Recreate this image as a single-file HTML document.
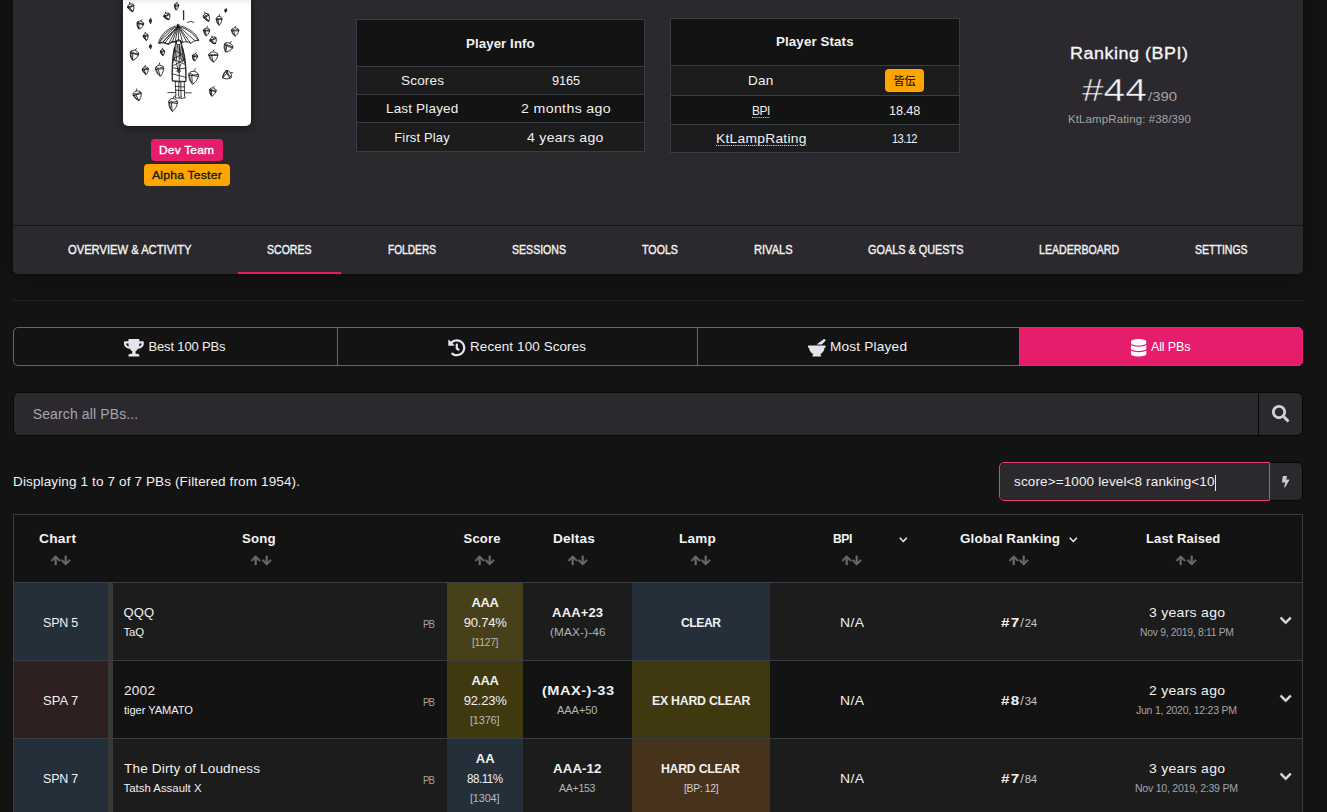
<!DOCTYPE html>
<html lang="en">
<head>
<meta charset="utf-8">
<title>Scores</title>
<style>
*{box-sizing:border-box;margin:0;padding:0}
html,body{width:1327px;height:812px;overflow:hidden;background:#131313}
body{font-family:"Liberation Sans","Noto Sans CJK JP",sans-serif;color:#ececec;font-size:14px;position:relative}
.abs{position:absolute}
.t{position:absolute;white-space:nowrap;line-height:1}
.ic{position:absolute;overflow:visible}
.card{position:absolute;left:13px;top:-30px;width:1290px;height:304px;background:#2b292d;border-radius:5px;box-shadow:0 0 22px 2px rgba(0,0,0,.35)}
.card .sep{position:absolute;left:0;right:0;top:255px;height:1px;background:#161618}
.avatar{position:absolute;left:123px;top:-6px;width:128px;height:132px;background:#fff;border-radius:5px;box-shadow:0 2px 8px rgba(0,0,0,.45);overflow:hidden}
.badge{position:absolute;border-radius:4px}
.it{position:absolute;border:1px solid #363d44;background:#131313}
.it .r{position:absolute;left:0;right:0;border-top:1px solid #363d44}
.it .odd{background:#1c1c1c}
.bg{position:absolute;left:13px;top:327px;width:1290px;height:39px;border:1px solid #6a6466;border-radius:5px;overflow:hidden}
.bg .d{position:absolute;top:0;bottom:0;width:1px;background:#6a6466}
.act{position:absolute;left:1019px;top:327px;width:284px;height:39px;background:#e61c6d;border:1px solid #ef2077;border-radius:0 5px 5px 0}
.inp{position:absolute;background:#2b292d;border:1px solid #070707;border-radius:6px}
.tbl{position:absolute;left:13px;top:514px;width:1290px;height:310px;border:1px solid #363d44;border-bottom:none;background:#131313}
.row{position:absolute;left:0;width:1288px;height:78px;border-top:1px solid #363d44}
.cell{position:absolute;top:0;bottom:0}

</style>
</head>
<body>
<header>
<div class="card"><div class="sep"></div></div>
<div class="avatar"><svg class="ic" style="left:0;top:4px" width="128" height="128" viewBox="0 0 128 128"><defs><linearGradient id="ag" x1="0" y1="0" x2="0" y2="1"><stop offset="0" stop-color="#e9e9e9"/><stop offset="1" stop-color="#fff"/></linearGradient></defs><rect x="0" y="0" width="128" height="7" fill="url(#ag)"/><g fill="none" stroke="#111" stroke-width="0.8" stroke-linecap="round" stroke-linejoin="round"><path transform="translate(8.01 9.20) rotate(-20)" d="M-3.03 -0.74 C-3.19 2.23 -1.01 3.97 0 4.96 C1.01 3.97 3.19 2.23 3.03 -0.74 M-3.36 -0.74 C-3.36 -4.22 3.36 -4.22 3.36 -0.74 Z M-2.69 -1.64 Q0 -0.15 2.69 -1.64 M0 -3.87 L0.50 -4.96 M-2.52 -0.44 C-2.35 2.48 -0.34 4.22 0.34 4.57 M-1.18 -0.24 L-0.34 3.47"/><path transform="translate(53.47 8.08) rotate(5)" d="M-2.02 -0.62 C-2.13 1.87 -0.67 3.33 0 4.16 C0.67 3.33 2.13 1.87 2.02 -0.62 M-2.24 -0.62 C-2.24 -3.54 2.24 -3.54 2.24 -0.62 Z M-1.79 -1.37 Q0 -0.12 1.79 -1.37 M0 -3.25 L0.34 -4.16 M-1.68 -0.32 C-1.57 2.08 -0.22 3.54 0.22 3.83 M-0.78 -0.12 L-0.22 2.91"/><path transform="translate(44.03 18.01) rotate(-25)" d="M-3.03 -0.62 C-3.19 1.87 -1.01 3.33 0 4.16 C1.01 3.33 3.19 1.87 3.03 -0.62 M-3.36 -0.62 C-3.36 -3.54 3.36 -3.54 3.36 -0.62 Z M-2.69 -1.37 Q0 -0.12 2.69 -1.37 M0 -3.25 L0.50 -4.16 M-2.52 -0.32 C-2.35 2.08 -0.34 3.54 0.34 3.83 M-1.18 -0.12 L-0.34 2.91"/><path transform="translate(27.54 22.81) rotate(0)" d="M-1.01 -0.41 C-1.06 1.22 -0.34 2.18 0 2.72 C0.34 2.18 1.06 1.22 1.01 -0.41 M-1.12 -0.41 C-1.12 -2.31 1.12 -2.31 1.12 -0.41 Z M-0.90 -0.90 Q0 -0.08 0.90 -0.90 M0 -2.12 L0.17 -2.72 M-0.84 -0.11 C-0.78 1.36 -0.11 2.31 0.11 2.50 M-0.39 0.09 L-0.11 1.91"/><path transform="translate(17.13 26.34) rotate(15)" d="M-3.17 -0.74 C-3.35 2.23 -1.06 3.97 0 4.96 C1.06 3.97 3.35 2.23 3.17 -0.74 M-3.52 -0.74 C-3.52 -4.22 3.52 -4.22 3.52 -0.74 Z M-2.82 -1.64 Q0 -0.15 2.82 -1.64 M0 -3.87 L0.53 -4.96 M-2.64 -0.44 C-2.47 2.48 -0.35 4.22 0.35 4.57 M-1.23 -0.24 L-0.35 3.47"/><path transform="translate(22.73 38.50) rotate(-10)" d="M-2.31 -0.62 C-2.43 1.87 -0.77 3.33 0 4.16 C0.77 3.33 2.43 1.87 2.31 -0.62 M-2.56 -0.62 C-2.56 -3.54 2.56 -3.54 2.56 -0.62 Z M-2.05 -1.37 Q0 -0.12 2.05 -1.37 M0 -3.25 L0.38 -4.16 M-1.92 -0.32 C-1.79 2.08 -0.26 3.54 0.26 3.83 M-0.90 -0.12 L-0.26 2.91"/><path transform="translate(27.54 48.43) rotate(0)" d="M-1.01 -0.36 C-1.06 1.08 -0.34 1.92 0 2.40 C0.34 1.92 1.06 1.08 1.01 -0.36 M-1.12 -0.36 C-1.12 -2.04 1.12 -2.04 1.12 -0.36 Z M-0.90 -0.79 Q0 -0.07 0.90 -0.79 M0 -1.87 L0.17 -2.40 M-0.84 -0.06 C-0.78 1.20 -0.11 2.04 0.11 2.21 M-0.39 0.14 L-0.11 1.68"/><path transform="translate(11.21 56.43) rotate(15)" d="M-4.03 -0.94 C-4.26 2.81 -1.34 5.00 0 6.24 C1.34 5.00 4.26 2.81 4.03 -0.94 M-4.48 -0.94 C-4.48 -5.31 4.48 -5.31 4.48 -0.94 Z M-3.59 -2.06 Q0 -0.19 3.59 -2.06 M0 -4.87 L0.67 -6.24 M-3.36 -0.64 C-3.14 3.12 -0.45 5.31 0.45 5.74 M-1.57 -0.44 L-0.45 4.37"/><path transform="translate(39.55 54.03) rotate(-5)" d="M-2.02 -0.58 C-2.13 1.73 -0.67 3.07 0 3.84 C0.67 3.07 2.13 1.73 2.02 -0.58 M-2.24 -0.58 C-2.24 -3.27 2.24 -3.27 2.24 -0.58 Z M-1.79 -1.27 Q0 -0.12 1.79 -1.27 M0 -3.00 L0.34 -3.84 M-1.68 -0.28 C-1.57 1.92 -0.22 3.27 0.22 3.54 M-0.78 -0.08 L-0.22 2.69"/><path transform="translate(22.41 71.96) rotate(-8)" d="M-2.88 -0.70 C-3.04 2.09 -0.96 3.71 0 4.64 C0.96 3.71 3.04 2.09 2.88 -0.70 M-3.20 -0.70 C-3.20 -3.95 3.20 -3.95 3.20 -0.70 Z M-2.56 -1.53 Q0 -0.14 2.56 -1.53 M0 -3.62 L0.48 -4.64 M-2.40 -0.40 C-2.24 2.32 -0.32 3.95 0.32 4.27 M-1.12 -0.20 L-0.32 3.25"/><path transform="translate(36.66 71.64) rotate(-5)" d="M-3.89 -1.01 C-4.11 3.03 -1.30 5.38 0 6.72 C1.30 5.38 4.11 3.03 3.89 -1.01 M-4.32 -1.01 C-4.32 -5.72 4.32 -5.72 4.32 -1.01 Z M-3.46 -2.22 Q0 -0.20 3.46 -2.22 M0 -5.24 L0.65 -6.72 M-3.24 -0.71 C-3.03 3.36 -0.43 5.72 0.43 6.19 M-1.51 -0.51 L-0.43 4.71"/><path transform="translate(14.41 96.94) rotate(-15)" d="M-3.89 -0.89 C-4.11 2.67 -1.30 4.74 0 5.92 C1.30 4.74 4.11 2.67 3.89 -0.89 M-4.32 -0.89 C-4.32 -5.04 4.32 -5.04 4.32 -0.89 Z M-3.46 -1.95 Q0 -0.18 3.46 -1.95 M0 -4.62 L0.65 -5.92 M-3.24 -0.59 C-3.03 2.96 -0.43 5.04 0.43 5.45 M-1.51 -0.39 L-0.43 4.15"/><path transform="translate(83.57 18.81) rotate(-25)" d="M-2.74 -0.77 C-2.89 2.31 -0.91 4.10 0 5.12 C0.91 4.10 2.89 2.31 2.74 -0.77 M-3.04 -0.77 C-3.04 -4.35 3.04 -4.35 3.04 -0.77 Z M-2.43 -1.69 Q0 -0.15 2.43 -1.69 M0 -4.00 L0.46 -5.12 M-2.28 -0.47 C-2.13 2.56 -0.30 4.35 0.30 4.71 M-1.06 -0.27 L-0.30 3.59"/><path transform="translate(96.06 22.01) rotate(0)" d="M-2.74 -0.82 C-2.89 2.45 -0.91 4.35 0 5.44 C0.91 4.35 2.89 2.45 2.74 -0.82 M-3.04 -0.82 C-3.04 -4.63 3.04 -4.63 3.04 -0.82 Z M-2.43 -1.80 Q0 -0.16 2.43 -1.80 M0 -4.25 L0.46 -5.44 M-2.28 -0.52 C-2.13 2.72 -0.30 4.63 0.30 5.01 M-1.06 -0.32 L-0.30 3.81"/><path transform="translate(102.79 12.41) rotate(10)" d="M-0.86 -0.29 C-0.91 0.86 -0.29 1.54 0 1.92 C0.29 1.54 0.91 0.86 0.86 -0.29 M-0.96 -0.29 C-0.96 -1.63 0.96 -1.63 0.96 -0.29 Z M-0.77 -0.63 Q0 -0.06 0.77 -0.63 M0 -1.50 L0.14 -1.92 M-0.72 0.01 C-0.67 0.96 -0.10 1.63 0.10 1.77 M-0.34 0.21 L-0.10 1.34"/><path transform="translate(83.57 33.22) rotate(5)" d="M-2.88 -0.72 C-3.04 2.16 -0.96 3.84 0 4.80 C0.96 3.84 3.04 2.16 2.88 -0.72 M-3.20 -0.72 C-3.20 -4.08 3.20 -4.08 3.20 -0.72 Z M-2.56 -1.59 Q0 -0.14 2.56 -1.59 M0 -3.75 L0.48 -4.80 M-2.40 -0.42 C-2.24 2.40 -0.32 4.08 0.32 4.42 M-1.12 -0.22 L-0.32 3.36"/><path transform="translate(112.07 33.22) rotate(0)" d="M-3.46 -0.77 C-3.65 2.31 -1.15 4.10 0 5.12 C1.15 4.10 3.65 2.31 3.46 -0.77 M-3.84 -0.77 C-3.84 -4.35 3.84 -4.35 3.84 -0.77 Z M-3.07 -1.69 Q0 -0.15 3.07 -1.69 M0 -4.00 L0.58 -5.12 M-2.88 -0.47 C-2.69 2.56 -0.38 4.35 0.38 4.71 M-1.34 -0.27 L-0.38 3.59"/><path transform="translate(90.30 42.03) rotate(-25)" d="M-3.17 -0.65 C-3.35 1.95 -1.06 3.46 0 4.32 C1.06 3.46 3.35 1.95 3.17 -0.65 M-3.52 -0.65 C-3.52 -3.67 3.52 -3.67 3.52 -0.65 Z M-2.82 -1.43 Q0 -0.13 2.82 -1.43 M0 -3.37 L0.53 -4.32 M-2.64 -0.35 C-2.47 2.16 -0.35 3.67 0.35 3.98 M-1.23 -0.15 L-0.35 3.03"/><path transform="translate(105.19 48.75) rotate(25)" d="M-4.18 -0.89 C-4.41 2.67 -1.39 4.74 0 5.92 C1.39 4.74 4.41 2.67 4.18 -0.89 M-4.64 -0.89 C-4.64 -5.04 4.64 -5.04 4.64 -0.89 Z M-3.71 -1.95 Q0 -0.18 3.71 -1.95 M0 -4.62 L0.70 -5.92 M-3.48 -0.59 C-3.25 2.96 -0.46 5.04 0.46 5.45 M-1.63 -0.39 L-0.46 4.15"/><path transform="translate(90.30 58.04) rotate(0)" d="M-4.32 -0.94 C-4.56 2.81 -1.44 5.00 0 6.24 C1.44 5.00 4.56 2.81 4.32 -0.94 M-4.80 -0.94 C-4.80 -5.31 4.80 -5.31 4.80 -0.94 Z M-3.84 -2.06 Q0 -0.19 3.84 -2.06 M0 -4.87 L0.72 -6.24 M-3.60 -0.64 C-3.36 3.12 -0.48 5.31 0.48 5.74 M-1.68 -0.44 L-0.48 4.37"/><path transform="translate(71.89 58.84) rotate(10)" d="M-2.45 -0.65 C-2.59 1.95 -0.82 3.46 0 4.32 C0.82 3.46 2.59 1.95 2.45 -0.65 M-2.72 -0.65 C-2.72 -3.67 2.72 -3.67 2.72 -0.65 Z M-2.18 -1.43 Q0 -0.13 2.18 -1.43 M0 -3.37 L0.41 -4.32 M-2.04 -0.35 C-1.91 2.16 -0.27 3.67 0.27 3.98 M-0.95 -0.15 L-0.27 3.03"/><path transform="translate(70.45 78.53) rotate(8)" d="M-4.61 -1.18 C-4.87 3.53 -1.54 6.28 0 7.85 C1.54 6.28 4.87 3.53 4.61 -1.18 M-5.12 -1.18 C-5.12 -6.67 5.12 -6.67 5.12 -1.18 Z M-4.10 -2.59 Q0 -0.24 4.10 -2.59 M0 -6.12 L0.77 -7.85 M-3.84 -0.88 C-3.59 3.92 -0.51 6.67 0.51 7.22 M-1.79 -0.68 L-0.51 5.49"/><path transform="translate(104.39 76.93) rotate(60)" d="M-4.03 -0.84 C-4.26 2.52 -1.34 4.48 0 5.60 C1.34 4.48 4.26 2.52 4.03 -0.84 M-4.48 -0.84 C-4.48 -4.76 4.48 -4.76 4.48 -0.84 Z M-3.59 -1.85 Q0 -0.17 3.59 -1.85 M0 -4.37 L0.67 -5.60 M-3.36 -0.54 C-3.14 2.80 -0.45 4.76 0.45 5.16 M-1.57 -0.34 L-0.45 3.92"/><path transform="translate(89.66 93.26) rotate(12)" d="M-3.17 -0.77 C-3.35 2.31 -1.06 4.10 0 5.12 C1.06 4.10 3.35 2.31 3.17 -0.77 M-3.52 -0.77 C-3.52 -4.35 3.52 -4.35 3.52 -0.77 Z M-2.82 -1.69 Q0 -0.15 2.82 -1.69 M0 -4.00 L0.53 -5.12 M-2.64 -0.47 C-2.47 2.56 -0.35 4.35 0.35 4.71 M-1.23 -0.27 L-0.35 3.59"/><path transform="translate(49.95 105.75) rotate(5)" d="M-4.18 -1.18 C-4.41 3.53 -1.39 6.28 0 7.85 C1.39 6.28 4.41 3.53 4.18 -1.18 M-4.64 -1.18 C-4.64 -6.67 4.64 -6.67 4.64 -1.18 Z M-3.71 -2.59 Q0 -0.24 3.71 -2.59 M0 -6.12 L0.70 -7.85 M-3.48 -0.88 C-3.25 3.92 -0.46 6.67 0.46 7.22 M-1.63 -0.68 L-0.46 5.49"/><path d="M35.63 44.29 C38.09 35.42 46.72 28.64 55.10 27.78 C63.97 28.64 73.22 34.80 75.68 42.19"/><path d="M36.37 45.03 C39.32 36.65 47.34 29.99 55.10 28.76 C63.36 29.99 71.98 36.16 75.07 42.81"/><path d="M35.63 44.66 Q40.56 42.81 45.49 45.89 Q48.57 42.19 52.26 43.43 Q55.96 41.58 59.66 44.29 Q63.97 42.19 67.67 45.28 Q71.98 41.58 75.68 42.19"/><path d="M35.87 45.28 Q40.80 43.80 45.49 46.51 Q48.94 43.06 52.26 44.04"/><path d="M55.10 27.78 L45.49 45.89"/><path d="M55.10 27.78 L52.26 43.43"/><path d="M55.10 27.78 L59.66 44.29"/><path d="M55.10 27.78 L67.67 45.28"/><path d="M55.10 27.78 L40.56 43.55"/><path d="M55.10 27.78 L71.98 42.81"/><path d="M55.10 27.78 L49.18 44.29"/><path d="M55.10 27.78 L63.97 44.29"/><path d="M37.48 42.81 L50.42 30.49"/><path d="M39.32 44.29 L51.65 31.47"/><path d="M41.79 45.03 L53.13 30.49"/><path d="M54.11 26.79 Q55.10 25.31 56.33 26.79 Q55.35 28.27 54.11 26.79"/><path d="M52.88 44.29 C52.88 40.96 58.30 40.96 58.30 44.29 C58.30 47.49 52.88 47.49 52.88 44.29"/><path d="M53.13 43.43 C51.03 48.97 51.65 58.83 49.80 64.99"/><path d="M58.06 43.43 C60.28 48.97 59.29 58.83 61.51 64.99"/><path d="M54.73 46.51 C53.50 52.67 54.36 58.83 52.88 63.76"/><path d="M56.58 46.51 C57.81 52.67 57.19 58.83 59.29 63.76"/><path d="M53.87 42.32 C52.26 47.74 53.13 55.14 51.40 62.53"/><path d="M57.32 42.32 C59.29 47.74 58.55 55.14 60.28 62.53"/><path d="M55.10 28.76 L55.59 42.81"/><path d="M56.33 47.12 L57.19 61.30"/><path d="M51.65 48.97 C49.80 58.83 49.18 71.16 49.43 82.87 L62.74 83.48 C62.99 71.16 62.12 58.83 59.29 48.97"/><path d="M51.16 50.21 C49.18 60.07 48.69 71.16 49.18 82.25"/><path d="M59.78 50.21 C62.74 60.07 63.48 71.16 62.99 82.50"/><path d="M49.43 82.87 Q55.96 84.96 62.74 83.48"/><path d="M53.50 64.99 L55.35 73.62 57.81 66.23"/><path d="M49.80 69.92 Q55.96 71.90 62.49 70.17"/><path d="M54.11 73.01 C54.11 70.91 57.32 70.91 57.32 73.01 C57.32 75.10 54.11 75.10 54.11 73.01"/><path d="M55.96 48.97 L56.33 82.87"/><path d="M50.42 61.30 L61.51 66.23"/><path d="M50.17 76.09 L62.12 79.17"/><path d="M61.75 61.30 L50.66 67.46"/><path d="M52.26 52.67 L59.04 56.37 51.65 60.07"/><path d="M52.26 83.48 L52.88 97.04"/><path d="M55.96 83.97 L55.59 97.04"/><path d="M57.81 83.97 L58.06 98.27"/><path d="M61.26 83.48 L61.51 97.04"/><path d="M52.88 97.04 L52.26 99.75 56.58 100.24 55.59 97.04"/><path d="M58.06 98.27 L57.81 100.49 62.25 99.75 61.51 97.04"/><path d="M52.26 88.41 L61.51 89.03"/><path d="M52.51 92.11 L61.51 92.72"/><path d="M44.87 94.57 L52.26 94.57"/><path d="M62.12 94.82 L68.29 94.82"/><path d="M60.28 12.62 L60.52 21.86"/><path d="M60.77 12.99 L60.77 21.61"/><path d="M64.59 24.32 Q67.67 22.35 70.87 24.32"/></g></svg></div>
<div class="badge" style="left:151px;top:139px;width:72px;height:21.7px;background:#e61c6d"></div>
<span class="t " id="t0" style="font-size:11.4px;top:145.00px;color:#fff;letter-spacing:0.187px;transform-origin:0 50%;left:159.30px;transform:scaleX(1.0499);-webkit-text-stroke:0.35px #fff">Dev Team</span>
<div class="badge" style="left:144px;top:164.2px;width:86px;height:21.6px;background:#ffa500"></div>
<span class="t " id="t1" style="font-size:11.4px;top:170.00px;color:#1b1b1b;letter-spacing:0.196px;transform-origin:0 50%;left:152.35px;transform:scaleX(1.0679);-webkit-text-stroke:0.35px #1b1b1b">Alpha Tester</span>
<div class="it" style="left:356px;top:19px;width:289px;height:133px"><div class="r odd" style="top:46px;height:29px"></div><div class="r" style="top:74px;height:29px"></div><div class="r odd" style="top:102px;height:29px"></div></div>
<span class="t " id="t2" style="font-size:13px;top:37.00px;font-weight:bold;color:#f1f1f1;letter-spacing:0.076px;transform-origin:0 50%;left:466.45px;transform:scaleX(1.0218)">Player Info</span>
<span class="t " id="t3" style="font-size:13px;top:74.00px;color:#f1f1f1;letter-spacing:0.170px;transform-origin:0 50%;left:400.50px;transform:scaleX(1.0407)">Scores</span>
<span class="t " id="t4" style="font-size:13px;top:74.00px;color:#f1f1f1;letter-spacing:-0.110px;transform-origin:0 50%;left:551.60px;transform:scaleX(0.9793)">9165</span>
<span class="t " id="t5" style="font-size:13px;top:102.00px;color:#f1f1f1;letter-spacing:0.147px;transform-origin:0 50%;left:385.85px;transform:scaleX(1.0417)">Last Played</span>
<span class="t " id="t6" style="font-size:13px;top:102.00px;color:#f1f1f1;letter-spacing:0.319px;transform-origin:0 50%;left:520.75px;transform:scaleX(1.0901)">2 months ago</span>
<span class="t " id="t7" style="font-size:13px;top:131.00px;color:#f1f1f1;letter-spacing:0.148px;left:394.25px">First Play</span>
<span class="t " id="t8" style="font-size:13px;top:131.00px;color:#f1f1f1;letter-spacing:0.274px;transform-origin:0 50%;left:527.40px;transform:scaleX(1.0810)">4 years ago</span>
<div class="it" style="left:670px;top:18px;width:290px;height:135px"><div class="r odd" style="top:46px;height:31px"></div><div class="r" style="top:76px;height:30px"></div><div class="r odd" style="top:105px;height:28px"></div></div>
<span class="t " id="t9" style="font-size:13px;top:35.00px;font-weight:bold;color:#f1f1f1;letter-spacing:0.098px;transform-origin:0 50%;left:776.00px;transform:scaleX(1.0276)">Player Stats</span>
<span class="t " id="t10" style="font-size:13px;top:74.00px;color:#f1f1f1;letter-spacing:0.243px;transform-origin:0 50%;left:748.15px;transform:scaleX(1.0392)">Dan</span>
<div class="badge" style="left:885px;top:69px;width:39px;height:23px;background:#ffa500"></div>
<span class="t " id="t11" style="font-size:11px;top:76.00px;color:#2a2100;left:893.60px;font-weight:500">皆伝</span>
<span class="t " id="t12" style="font-size:13px;top:104.00px;color:#f1f1f1;letter-spacing:-0.509px;transform-origin:0 50%;left:751.65px;transform:scaleX(0.9173);text-decoration:underline dotted #e8e8e8 1px;text-underline-offset:2px">BPI</span>
<span class="t " id="t13" style="font-size:13px;top:104.00px;color:#f1f1f1;letter-spacing:-0.112px;transform-origin:0 50%;left:888.65px;transform:scaleX(0.9751)">18.48</span>
<span class="t " id="t14" style="font-size:13px;top:132.00px;color:#f1f1f1;letter-spacing:0.240px;transform-origin:0 50%;left:715.60px;transform:scaleX(1.0632);text-decoration:underline dotted #e8e8e8 1px;text-underline-offset:2px">KtLampRating</span>
<span class="t " id="t15" style="font-size:13px;top:132.00px;color:#f1f1f1;letter-spacing:-0.706px;transform-origin:0 50%;left:891.50px;transform:scaleX(0.8613)">13.12</span>
<span class="t " id="t16" style="font-size:16px;top:46.00px;color:#f6f6f6;letter-spacing:0.479px;transform-origin:0 50%;left:1069.70px;transform:scaleX(1.1201);-webkit-text-stroke:0.3px #f6f6f6">Ranking (BPI)</span>
<span class="t " id="t17" style="font-size:32px;top:74.00px;color:#f6f6f6;transform-origin:0 50%;left:1082.00px;transform:scaleX(1.2118);-webkit-text-stroke:0.45px #2b292d">#44</span>
<span class="t " id="t18" style="font-size:12.4px;top:91.00px;color:#a3a3a7;transform-origin:0 50%;left:1148.00px;transform:scaleX(1.2021)">/390</span>
<span class="t " id="t19" style="font-size:11px;top:114.00px;color:#a3a3a7;letter-spacing:0.124px;transform-origin:0 50%;left:1067.50px;transform:scaleX(1.0416)">KtLampRating: #38/390</span>
</header>
<nav>
<span class="t " id="t20" style="font-size:13px;top:243.00px;color:#f3f3f3;transform-origin:0 50%;left:67.50px;transform:scaleX(0.8605);-webkit-text-stroke:0.4px #f3f3f3">OVERVIEW &amp; ACTIVITY</span>
<span class="t " id="t21" style="font-size:13px;top:243.00px;color:#f3f3f3;transform-origin:0 50%;left:267.00px;transform:scaleX(0.8105);-webkit-text-stroke:0.4px #f3f3f3">SCORES</span>
<span class="t " id="t22" style="font-size:13px;top:243.00px;color:#f3f3f3;transform-origin:0 50%;left:387.50px;transform:scaleX(0.7817);-webkit-text-stroke:0.4px #f3f3f3">FOLDERS</span>
<span class="t " id="t23" style="font-size:13px;top:243.00px;color:#f3f3f3;transform-origin:0 50%;left:511.50px;transform:scaleX(0.8124);-webkit-text-stroke:0.4px #f3f3f3">SESSIONS</span>
<span class="t " id="t24" style="font-size:13px;top:243.00px;color:#f3f3f3;transform-origin:0 50%;left:642.00px;transform:scaleX(0.8211);-webkit-text-stroke:0.4px #f3f3f3">TOOLS</span>
<span class="t " id="t25" style="font-size:13px;top:243.00px;color:#f3f3f3;transform-origin:0 50%;left:754.00px;transform:scaleX(0.8524);-webkit-text-stroke:0.4px #f3f3f3">RIVALS</span>
<span class="t " id="t26" style="font-size:13px;top:243.00px;color:#f3f3f3;transform-origin:0 50%;left:868.20px;transform:scaleX(0.8366);-webkit-text-stroke:0.4px #f3f3f3">GOALS &amp; QUESTS</span>
<span class="t " id="t27" style="font-size:13px;top:243.00px;color:#f3f3f3;transform-origin:0 50%;left:1039.30px;transform:scaleX(0.8153);-webkit-text-stroke:0.4px #f3f3f3">LEADERBOARD</span>
<span class="t " id="t28" style="font-size:13px;top:243.00px;color:#f3f3f3;transform-origin:0 50%;left:1195.40px;transform:scaleX(0.8090);-webkit-text-stroke:0.4px #f3f3f3">SETTINGS</span>
<div class="abs" style="left:238px;top:271.5px;width:103px;height:2.5px;background:#e61c6d"></div>
</nav>
<main>
<div class="abs" style="left:13px;top:300px;width:1290px;height:1px;background:#222224"></div>
<section>
<div class="bg"><div class="d" style="left:323px"></div><div class="d" style="left:683px"></div></div><div class="act"></div>
<svg class="ic" style="left:124.20px;top:338.60px;" width="19.80" height="17.60" viewBox="0 0 576 512"><path fill="#e4e4ee" d="M552 64H448V24c0-13.3-10.7-24-24-24H152c-13.3 0-24 10.7-24 24v40H24C10.7 64 0 74.7 0 88v56c0 35.7 22.500 72.400 61.900 100.700 31.500 22.700 69.800 37.100 110 41.700C203.300 338.500 240 360 240 360v72h-48c-35.300 0-64 20.700-64 56v12c0 6.600 5.400 12 12 12h296c6.600 0 12-5.400 12-12v-12c0-35.300-28.700-56-64-56h-48v-72s36.700-21.500 68.100-73.600c40.300-4.600 78.600-19 110-41.700 39.300-28.300 61.900-65 61.900-100.700V88c0-13.300-10.700-24-24-24zM99.300 192.800C74.900 175.200 64 155.600 64 144v-16h64.200c1 32.600 5.800 61.200 12.800 86.200-15.100-5.200-29.200-12.400-41.700-21.400zM512 144c0 16.100-17.700 36.100-35.300 48.800-12.500 9-26.700 16.200-41.800 21.400 7-25 11.800-53.600 12.800-86.200H512v16z"/></svg>
<span class="t " id="t29" style="font-size:13px;top:340.00px;color:#f1f1f1;letter-spacing:-0.162px;left:148.50px">Best 100 PBs</span>
<svg class="ic" style="left:447.90px;top:339.30px;" width="17.60" height="17.60" viewBox="0 0 512 512"><path fill="#e4e4ee" d="M504 255.531c.253 136.640-111.180 248.372-247.820 248.468-59.015.042-113.223-20.530-155.822-54.911-11.077-8.940-11.905-25.541-1.839-35.607l11.267-11.267c8.609-8.609 22.353-9.551 31.891-1.984C173.062 425.135 212.781 440 256 440c101.705 0 184-82.311 184-184 0-101.705-82.311-184-184-184-48.814 0-93.149 18.969-126.068 49.932l50.754 50.754c10.080 10.080 2.941 27.314-11.313 27.314H24c-8.837 0-16-7.163-16-16V38.627c0-14.254 17.234-21.393 27.314-11.314l49.372 49.372C129.209 34.136 189.552 8 256 8c136.810 0 247.747 110.780 248 247.531zm-180.912 78.784l9.823-12.630c8.138-10.463 6.253-25.542-4.210-33.679L288 256.349V152c0-13.255-10.745-24-24-24h-16c-13.255 0-24 10.745-24 24v135.651l65.409 50.874c10.463 8.137 25.541 6.253 33.679-4.210z"/></svg>
<span class="t " id="t30" style="font-size:13px;top:340.00px;color:#f1f1f1;letter-spacing:0.115px;transform-origin:0 50%;left:469.70px;transform:scaleX(1.0319)">Recent 100 Scores</span>
<svg class="ic" style="left:808.40px;top:338.90px;" width="17.60" height="17.60" viewBox="0 0 512 512"><path fill="#e4e4ee" d="M501.540 60.910c17.220-17.220 12.510-46.250-9.270-57.140a35.696 35.696 0 0 0-37.370 3.370L251.090 160h151.370l99.080-99.090zM496 192H16c-8.840 0-16 7.160-16 16v32c0 8.840 7.160 16 16 16h16c0 80.980 50.200 150.110 121.130 178.320-12.760 16.870-21.720 36.800-24.950 58.690-1.460 9.920 6.040 18.980 16.070 18.980h223.500c10.030 0 17.530-9.060 16.070-18.980-3.220-21.890-12.180-41.820-24.950-58.690C429.800 406.110 480 336.980 480 256h16c8.840 0 16-7.160 16-16v-32c0-8.840-7.160-16-16-16z"/></svg>
<span class="t " id="t31" style="font-size:13px;top:340.00px;color:#f1f1f1;letter-spacing:0.182px;transform-origin:0 50%;left:830.40px;transform:scaleX(1.0495)">Most Played</span>
<svg class="ic" style="left:1130.50px;top:338.80px;" width="15.31" height="17.50" viewBox="0 0 448 512"><path fill="#fff" d="M448 73.143v45.714C448 159.143 347.667 192 224 192S0 159.143 0 118.857V73.143C0 32.857 100.333 0 224 0s224 32.857 224 73.143zM448 176v102.857C448 319.143 347.667 352 224 352S0 319.143 0 278.857V176c48.125 33.143 136.208 48.572 224 48.572S399.874 209.143 448 176zm0 160v102.857C448 479.143 347.667 512 224 512S0 479.143 0 438.857V336c48.125 33.143 136.208 48.572 224 48.572S399.874 369.143 448 336z"/></svg>
<span class="t " id="t32" style="font-size:13px;top:340.00px;color:#fff;letter-spacing:-0.146px;transform-origin:0 50%;left:1151.00px;transform:scaleX(0.9627)">All PBs</span>
</section>
<section>
<div class="inp" style="left:13px;top:392px;width:1290px;height:44px"><div class="abs" style="left:1244px;top:0;bottom:0;width:1px;background:#070707"></div></div>
<span class="t " id="t33" style="font-size:14px;top:407.00px;color:#a4a4ae;letter-spacing:0.125px;left:32.70px">Search all PBs...</span>
<svg class="ic" style="left:1271.80px;top:405.00px;" width="17.30" height="17.30" viewBox="0 0 512 512"><path fill="#cfcfdd" d="M505 442.700L405.300 343c-4.500-4.500-10.600-7-17-7H372c27.600-35.300 44-79.700 44-128C416 93.100 322.900 0 208 0S0 93.100 0 208s93.100 208 208 208c48.300 0 92.700-16.400 128-44v16.300c0 6.400 2.500 12.500 7 17l99.700 99.700c9.400 9.400 24.600 9.400 33.900 0l28.300-28.300c9.400-9.400 9.400-24.600.1-34zM208 336c-70.700 0-128-57.200-128-128 0-70.700 57.200-128 128-128 70.700 0 128 57.200 128 128 0 70.700-57.200 128-128 128z"/></svg>
<span class="t " id="t34" style="font-size:13px;top:475.00px;color:#f1f1f1;letter-spacing:0.120px;transform-origin:0 50%;left:13.30px;transform:scaleX(1.0403)">Displaying 1 to 7 of 7 PBs (Filtered from 1954).</span>
<div class="inp" style="left:999px;top:462px;width:304px;height:39px"></div>
<div class="abs" style="left:999px;top:462px;width:271px;height:39px;border:1px solid #e0407c;border-radius:5px 0 0 5px"></div>
<span class="t " id="t35" style="font-size:13px;top:475.00px;color:#f1f1f1;letter-spacing:0.129px;transform-origin:0 50%;left:1013.50px;transform:scaleX(1.0382)">score&gt;=1000 level&lt;8 ranking&lt;10</span>
<div class="abs" style="left:1215.3px;top:474.5px;width:1px;height:16px;background:#f0f0f0"></div>
<svg class="ic" style="left:1282.00px;top:475.60px;" width="7.25" height="11.60" viewBox="0 0 320 512"><path fill="#c9c9d6" d="M296 160H180.600l42.600-129.800C227.200 15 215.700 0 200 0H56C44 0 33.800 8.900 32.200 20.800l-32 240C-1.700 275.200 9.500 288 24 288h118.700L96.600 482.500c-3.600 15.200 8 29.500 23.300 29.500 8.400 0 16.400-4.400 20.800-12l176-304c9.300-15.900-2.200-36-20.700-36z"/></svg>
</section>
<section>
<div class="tbl">
<div class="row" style="top:67px;background:#1c1c1c"><div class="cell" style="left:0;width:94px;background:#242f39"></div><div class="cell" style="left:94px;width:5px;background:#383838"></div><div class="cell" style="left:433px;width:76px;background:#484018"></div><div class="cell" style="left:618px;width:138px;background:#242f39"></div></div>
<div class="row" style="top:145px;background:#131313"><div class="cell" style="left:0;width:94px;background:#2e2020"></div><div class="cell" style="left:94px;width:5px;background:#383838"></div><div class="cell" style="left:433px;width:76px;background:#40380f"></div><div class="cell" style="left:618px;width:138px;background:#40380f"></div></div>
<div class="row" style="top:223px;background:#1c1c1c"><div class="cell" style="left:0;width:94px;background:#242f39"></div><div class="cell" style="left:94px;width:5px;background:#383838"></div><div class="cell" style="left:433px;width:76px;background:#242f39"></div><div class="cell" style="left:618px;width:138px;background:#47321b"></div></div>
</div>
<span class="t " id="t36" style="font-size:13px;top:532.00px;font-weight:bold;color:#f4f4f4;letter-spacing:0.252px;transform-origin:0 50%;left:38.75px;transform:scaleX(1.0583)">Chart</span>
<span class="t " id="t37" style="font-size:13px;top:532.00px;font-weight:bold;color:#f4f4f4;letter-spacing:0.114px;transform-origin:0 50%;left:241.50px;transform:scaleX(1.0200)">Song</span>
<span class="t " id="t38" style="font-size:13px;top:532.00px;font-weight:bold;color:#f4f4f4;letter-spacing:0.165px;left:463.60px">Score</span>
<span class="t " id="t39" style="font-size:13px;top:532.00px;font-weight:bold;color:#f4f4f4;letter-spacing:0.192px;transform-origin:0 50%;left:553.40px;transform:scaleX(1.0478)">Deltas</span>
<span class="t " id="t40" style="font-size:13px;top:532.00px;font-weight:bold;color:#f4f4f4;letter-spacing:0.239px;transform-origin:0 50%;left:679.40px;transform:scaleX(1.0399)">Lamp</span>
<span class="t " id="t41" style="font-size:13px;top:532.00px;font-weight:bold;color:#f4f4f4;letter-spacing:-0.447px;transform-origin:0 50%;left:833.30px;transform:scaleX(0.9289)">BPI</span>
<span class="t " id="t42" style="font-size:13px;top:532.00px;font-weight:bold;color:#f4f4f4;letter-spacing:0.122px;transform-origin:0 50%;left:960.00px;transform:scaleX(1.0317)">Global Ranking</span>
<span class="t " id="t43" style="font-size:13px;top:532.00px;font-weight:bold;color:#f4f4f4;letter-spacing:0.132px;left:1146.00px">Last Raised</span>
<svg class="ic" style="left:50.85px;top:554.90px;" width="9.45" height="10.80" viewBox="0 0 448 512"><path fill="#6e6969" stroke="#6e6969" stroke-width="26" stroke-linejoin="round" d="M34.900 289.500l-22.200-22.200c-9.400-9.400-9.400-24.600 0-33.900L207 39c9.400-9.400 24.600-9.400 33.900 0l194.300 194.300c9.400 9.400 9.400 24.600 0 33.900L413 289.400c-9.500 9.500-25 9.300-34.300-.4L264 168.600V456c0 13.300-10.700 24-24 24h-32c-13.300 0-24-10.700-24-24V168.600L69.200 289.100c-9.300 9.800-24.800 10-34.300.4z"/></svg><svg class="ic" style="left:61.15px;top:554.90px;" width="9.45" height="10.80" viewBox="0 0 448 512"><path fill="#6e6969" stroke="#6e6969" stroke-width="26" stroke-linejoin="round" d="M413.100 222.500l22.200 22.200c9.400 9.400 9.400 24.600 0 33.900L241 473c-9.400 9.400-24.600 9.400-33.900 0L12.700 278.600c-9.400-9.400-9.400-24.600 0-33.900l22.200-22.200c9.500-9.500 25-9.300 34.300.4L184 343.400V56c0-13.300 10.700-24 24-24h32c13.300 0 24 10.700 24 24v287.400l114.800-120.500c9.300-9.800 24.800-10 34.300-.4z"/></svg>
<svg class="ic" style="left:251.35px;top:554.90px;" width="9.45" height="10.80" viewBox="0 0 448 512"><path fill="#6e6969" stroke="#6e6969" stroke-width="26" stroke-linejoin="round" d="M34.900 289.500l-22.200-22.200c-9.400-9.400-9.400-24.600 0-33.900L207 39c9.400-9.400 24.600-9.400 33.900 0l194.300 194.300c9.400 9.400 9.400 24.600 0 33.900L413 289.400c-9.500 9.500-25 9.300-34.300-.4L264 168.600V456c0 13.300-10.700 24-24 24h-32c-13.300 0-24-10.700-24-24V168.600L69.200 289.100c-9.300 9.800-24.800 10-34.300.4z"/></svg><svg class="ic" style="left:261.65px;top:554.90px;" width="9.45" height="10.80" viewBox="0 0 448 512"><path fill="#6e6969" stroke="#6e6969" stroke-width="26" stroke-linejoin="round" d="M413.100 222.500l22.200 22.200c9.400 9.400 9.400 24.600 0 33.900L241 473c-9.400 9.400-24.600 9.400-33.900 0L12.700 278.600c-9.400-9.400-9.400-24.600 0-33.900l22.200-22.200c9.500-9.500 25-9.300 34.300.4L184 343.400V56c0-13.300 10.700-24 24-24h32c13.300 0 24 10.700 24 24v287.400l114.800-120.500c9.300-9.800 24.800-10 34.300-.4z"/></svg>
<svg class="ic" style="left:475.15px;top:554.90px;" width="9.45" height="10.80" viewBox="0 0 448 512"><path fill="#6e6969" stroke="#6e6969" stroke-width="26" stroke-linejoin="round" d="M34.900 289.500l-22.200-22.200c-9.400-9.400-9.400-24.600 0-33.900L207 39c9.400-9.400 24.600-9.400 33.900 0l194.300 194.300c9.400 9.400 9.400 24.600 0 33.900L413 289.400c-9.500 9.500-25 9.300-34.300-.4L264 168.600V456c0 13.300-10.700 24-24 24h-32c-13.300 0-24-10.700-24-24V168.600L69.200 289.100c-9.300 9.800-24.800 10-34.300.4z"/></svg><svg class="ic" style="left:485.45px;top:554.90px;" width="9.45" height="10.80" viewBox="0 0 448 512"><path fill="#6e6969" stroke="#6e6969" stroke-width="26" stroke-linejoin="round" d="M413.100 222.500l22.200 22.200c9.400 9.400 9.400 24.600 0 33.900L241 473c-9.400 9.400-24.600 9.400-33.900 0L12.700 278.600c-9.400-9.400-9.400-24.600 0-33.900l22.200-22.200c9.500-9.500 25-9.300 34.300.4L184 343.400V56c0-13.300 10.700-24 24-24h32c13.300 0 24 10.700 24 24v287.400l114.800-120.500c9.300-9.800 24.800-10 34.300-.4z"/></svg>
<svg class="ic" style="left:567.65px;top:554.90px;" width="9.45" height="10.80" viewBox="0 0 448 512"><path fill="#6e6969" stroke="#6e6969" stroke-width="26" stroke-linejoin="round" d="M34.900 289.500l-22.200-22.200c-9.400-9.400-9.400-24.600 0-33.900L207 39c9.400-9.400 24.600-9.400 33.900 0l194.300 194.300c9.400 9.400 9.400 24.600 0 33.900L413 289.400c-9.500 9.500-25 9.300-34.300-.4L264 168.600V456c0 13.300-10.700 24-24 24h-32c-13.300 0-24-10.700-24-24V168.600L69.200 289.100c-9.300 9.800-24.800 10-34.300.4z"/></svg><svg class="ic" style="left:577.95px;top:554.90px;" width="9.45" height="10.80" viewBox="0 0 448 512"><path fill="#6e6969" stroke="#6e6969" stroke-width="26" stroke-linejoin="round" d="M413.100 222.500l22.200 22.200c9.400 9.400 9.400 24.600 0 33.900L241 473c-9.400 9.400-24.600 9.400-33.900 0L12.700 278.600c-9.400-9.400-9.400-24.600 0-33.900l22.200-22.200c9.500-9.500 25-9.300 34.300.4L184 343.400V56c0-13.300 10.700-24 24-24h32c13.300 0 24 10.700 24 24v287.400l114.800-120.500c9.300-9.800 24.800-10 34.300-.4z"/></svg>
<svg class="ic" style="left:690.65px;top:554.90px;" width="9.45" height="10.80" viewBox="0 0 448 512"><path fill="#6e6969" stroke="#6e6969" stroke-width="26" stroke-linejoin="round" d="M34.900 289.500l-22.200-22.200c-9.400-9.400-9.400-24.600 0-33.900L207 39c9.400-9.400 24.600-9.400 33.900 0l194.300 194.300c9.400 9.400 9.400 24.600 0 33.900L413 289.400c-9.500 9.500-25 9.300-34.300-.4L264 168.600V456c0 13.300-10.700 24-24 24h-32c-13.300 0-24-10.700-24-24V168.600L69.200 289.100c-9.300 9.800-24.800 10-34.300.4z"/></svg><svg class="ic" style="left:700.95px;top:554.90px;" width="9.45" height="10.80" viewBox="0 0 448 512"><path fill="#6e6969" stroke="#6e6969" stroke-width="26" stroke-linejoin="round" d="M413.100 222.500l22.200 22.200c9.400 9.400 9.400 24.600 0 33.900L241 473c-9.400 9.400-24.600 9.400-33.900 0L12.700 278.600c-9.400-9.400-9.400-24.600 0-33.900l22.200-22.200c9.500-9.500 25-9.300 34.300.4L184 343.400V56c0-13.300 10.700-24 24-24h32c13.300 0 24 10.700 24 24v287.400l114.800-120.500c9.300-9.800 24.800-10 34.300-.4z"/></svg>
<svg class="ic" style="left:841.85px;top:554.90px;" width="9.45" height="10.80" viewBox="0 0 448 512"><path fill="#6e6969" stroke="#6e6969" stroke-width="26" stroke-linejoin="round" d="M34.900 289.500l-22.200-22.200c-9.400-9.400-9.400-24.600 0-33.900L207 39c9.400-9.400 24.600-9.400 33.900 0l194.300 194.300c9.400 9.400 9.400 24.600 0 33.900L413 289.400c-9.500 9.500-25 9.300-34.300-.4L264 168.600V456c0 13.300-10.700 24-24 24h-32c-13.300 0-24-10.700-24-24V168.600L69.200 289.100c-9.300 9.800-24.800 10-34.300.4z"/></svg><svg class="ic" style="left:852.15px;top:554.90px;" width="9.45" height="10.80" viewBox="0 0 448 512"><path fill="#6e6969" stroke="#6e6969" stroke-width="26" stroke-linejoin="round" d="M413.100 222.500l22.200 22.200c9.400 9.400 9.400 24.600 0 33.900L241 473c-9.400 9.400-24.600 9.400-33.900 0L12.700 278.600c-9.400-9.400-9.400-24.600 0-33.900l22.200-22.200c9.500-9.500 25-9.300 34.300.4L184 343.400V56c0-13.300 10.700-24 24-24h32c13.300 0 24 10.700 24 24v287.400l114.800-120.500c9.300-9.800 24.800-10 34.300-.4z"/></svg>
<svg class="ic" style="left:1008.85px;top:554.90px;" width="9.45" height="10.80" viewBox="0 0 448 512"><path fill="#6e6969" stroke="#6e6969" stroke-width="26" stroke-linejoin="round" d="M34.900 289.500l-22.200-22.200c-9.400-9.400-9.400-24.600 0-33.900L207 39c9.400-9.400 24.600-9.400 33.900 0l194.300 194.300c9.400 9.400 9.400 24.600 0 33.900L413 289.400c-9.500 9.500-25 9.300-34.300-.4L264 168.600V456c0 13.300-10.700 24-24 24h-32c-13.300 0-24-10.700-24-24V168.600L69.200 289.100c-9.300 9.800-24.800 10-34.300.4z"/></svg><svg class="ic" style="left:1019.15px;top:554.90px;" width="9.45" height="10.80" viewBox="0 0 448 512"><path fill="#6e6969" stroke="#6e6969" stroke-width="26" stroke-linejoin="round" d="M413.100 222.500l22.200 22.200c9.400 9.400 9.400 24.600 0 33.900L241 473c-9.400 9.400-24.600 9.400-33.900 0L12.700 278.600c-9.400-9.400-9.400-24.600 0-33.900l22.200-22.200c9.500-9.500 25-9.300 34.300.4L184 343.400V56c0-13.300 10.700-24 24-24h32c13.300 0 24 10.700 24 24v287.400l114.800-120.500c9.300-9.800 24.800-10 34.300-.4z"/></svg>
<svg class="ic" style="left:1176.35px;top:554.90px;" width="9.45" height="10.80" viewBox="0 0 448 512"><path fill="#6e6969" stroke="#6e6969" stroke-width="26" stroke-linejoin="round" d="M34.900 289.500l-22.200-22.200c-9.400-9.400-9.400-24.600 0-33.900L207 39c9.400-9.400 24.600-9.400 33.900 0l194.300 194.300c9.400 9.400 9.400 24.600 0 33.900L413 289.400c-9.500 9.500-25 9.300-34.300-.4L264 168.600V456c0 13.300-10.700 24-24 24h-32c-13.300 0-24-10.700-24-24V168.600L69.200 289.100c-9.300 9.800-24.800 10-34.300.4z"/></svg><svg class="ic" style="left:1186.65px;top:554.90px;" width="9.45" height="10.80" viewBox="0 0 448 512"><path fill="#6e6969" stroke="#6e6969" stroke-width="26" stroke-linejoin="round" d="M413.100 222.500l22.200 22.200c9.400 9.400 9.400 24.600 0 33.900L241 473c-9.400 9.400-24.600 9.400-33.900 0L12.700 278.600c-9.400-9.400-9.400-24.600 0-33.900l22.200-22.200c9.500-9.500 25-9.300 34.300.4L184 343.400V56c0-13.300 10.700-24 24-24h32c13.300 0 24 10.700 24 24v287.400l114.800-120.500c9.300-9.800 24.800-10 34.300-.4z"/></svg>
<svg class="ic" style="left:898.7px;top:536.7px" width="8.7" height="5.7" viewBox="0 0 8.7 5.7"><path d="M0.8 0.8 L4.35 4.5 L7.9 0.8" fill="none" stroke="#f0f0f0" stroke-width="1.5"/></svg>
<svg class="ic" style="left:1068.7px;top:536.7px" width="8.7" height="5.7" viewBox="0 0 8.7 5.7"><path d="M0.8 0.8 L4.35 4.5 L7.9 0.8" fill="none" stroke="#f0f0f0" stroke-width="1.5"/></svg>
<span class="t " id="t44" style="font-size:13px;top:616.00px;color:#f1f1f1;letter-spacing:-0.208px;transform-origin:0 50%;left:43.05px;transform:scaleX(0.9606)">SPN 5</span>
<span class="t " id="t45" style="font-size:13px;top:606.00px;color:#f1f1f1;letter-spacing:0.078px;left:123.50px">QQQ</span>
<span class="t " id="t46" style="font-size:11.4px;top:627.00px;color:#f1f1f1;letter-spacing:-0.195px;left:123.50px">TaQ</span>
<span class="t " id="t47" style="font-size:11px;top:619.00px;color:#a3a3a7;letter-spacing:-1.068px;transform-origin:0 50%;left:422.80px;transform:scaleX(0.8811)">PB</span>
<span class="t " id="t48" style="font-size:13px;top:596.00px;font-weight:bold;color:#f1f1f1;letter-spacing:-0.336px;left:471.45px">AAA</span>
<span class="t " id="t49" style="font-size:13px;top:616.00px;color:#f1f1f1;letter-spacing:-0.219px;left:463.80px">90.74%</span>
<span class="t " id="t50" style="font-size:11.4px;top:637.00px;color:#b8b8b8;letter-spacing:-0.333px;transform-origin:0 50%;left:471.95px;transform:scaleX(0.9087)">[1127]</span>
<span class="t " id="t51" style="font-size:13px;top:606.00px;font-weight:bold;color:#f1f1f1;letter-spacing:0.156px;left:552.10px">AAA+23</span>
<span class="t " id="t52" style="font-size:11.4px;top:627.00px;color:#b4b4b6;letter-spacing:0.125px;transform-origin:0 50%;left:549.95px;transform:scaleX(1.0367)">(MAX-)-46</span>
<span class="t " id="t53" style="font-size:13px;top:616.00px;font-weight:bold;color:#f1f1f1;letter-spacing:-0.450px;transform-origin:0 50%;left:680.80px;transform:scaleX(0.9306)">CLEAR</span>
<span class="t " id="t54" style="font-size:13px;top:616.00px;color:#f1f1f1;letter-spacing:0.381px;transform-origin:0 50%;left:840.00px;transform:scaleX(1.0698)">N/A</span>
<span class="t " id="t55" style="font-size:13px;top:616.00px;font-weight:bold;color:#f1f1f1;letter-spacing:1.144px;transform-origin:0 50%;left:1001.30px;transform:scaleX(1.1721)">#7</span>
<span class="t " id="t56" style="font-size:13px;top:616.00px;color:#c4c4c8;left:1020.30px">/</span>
<span class="t " id="t57" style="font-size:11.4px;top:618.00px;color:#c4c4c8;letter-spacing:-0.272px;left:1024.80px">24</span>
<span class="t " id="t58" style="font-size:13px;top:606.00px;color:#f1f1f1;letter-spacing:0.262px;transform-origin:0 50%;left:1148.60px;transform:scaleX(1.0771)">3 years ago</span>
<span class="t " id="t59" style="font-size:11.4px;top:627.00px;color:#a3a3a7;letter-spacing:-0.311px;transform-origin:0 50%;left:1139.60px;transform:scaleX(0.9088)">Nov 9, 2019, 8:11 PM</span>
<svg class="ic" style="left:1280.00px;top:613.85px;" width="11.38" height="13.00" viewBox="0 0 448 512"><path fill="#d9d9e6" stroke="#d9d9e6" stroke-width="22" stroke-linejoin="round" d="M207.029 381.476L12.686 187.132c-9.373-9.373-9.373-24.569 0-33.941l22.667-22.667c9.357-9.357 24.522-9.375 33.901-.040L224 284.505l154.745-154.021c9.379-9.335 24.544-9.317 33.901.040l22.667 22.667c9.373 9.373 9.373 24.569 0 33.941L240.971 381.476c-9.373 9.372-24.569 9.372-33.942 0z"/></svg>
<span class="t " id="t60" style="font-size:13px;top:694.00px;color:#f1f1f1;letter-spacing:0.028px;left:43.05px">SPA 7</span>
<span class="t " id="t61" style="font-size:13px;top:684.00px;color:#f1f1f1;letter-spacing:0.232px;transform-origin:0 50%;left:123.50px;transform:scaleX(1.0467)">2002</span>
<span class="t " id="t62" style="font-size:11.4px;top:705.00px;color:#f1f1f1;letter-spacing:-0.076px;transform-origin:0 50%;left:123.50px;transform:scaleX(0.9788)">tiger YAMATO</span>
<span class="t " id="t63" style="font-size:11px;top:697.00px;color:#a3a3a7;letter-spacing:-1.068px;transform-origin:0 50%;left:422.80px;transform:scaleX(0.8811)">PB</span>
<span class="t " id="t64" style="font-size:13px;top:674.00px;font-weight:bold;color:#f1f1f1;letter-spacing:-0.336px;left:471.45px">AAA</span>
<span class="t " id="t65" style="font-size:13px;top:694.00px;color:#f1f1f1;letter-spacing:-0.219px;left:463.80px">92.23%</span>
<span class="t " id="t66" style="font-size:11.4px;top:715.00px;color:#b8b8b8;letter-spacing:-0.159px;transform-origin:0 50%;left:470.45px;transform:scaleX(0.9554)">[1376]</span>
<span class="t " id="t67" style="font-size:13px;top:684.00px;font-weight:bold;color:#f1f1f1;letter-spacing:0.442px;transform-origin:0 50%;left:541.60px;transform:scaleX(1.1214)">(MAX-)-33</span>
<span class="t " id="t68" style="font-size:11.4px;top:705.00px;color:#b4b4b6;letter-spacing:-0.117px;transform-origin:0 50%;left:557.45px;transform:scaleX(0.9749)">AAA+50</span>
<span class="t " id="t69" style="font-size:13px;top:694.00px;font-weight:bold;color:#f1f1f1;letter-spacing:-0.262px;transform-origin:0 50%;left:651.60px;transform:scaleX(0.9483)">EX HARD CLEAR</span>
<span class="t " id="t70" style="font-size:13px;top:694.00px;color:#f1f1f1;letter-spacing:0.381px;transform-origin:0 50%;left:840.00px;transform:scaleX(1.0698)">N/A</span>
<span class="t " id="t71" style="font-size:13px;top:694.00px;font-weight:bold;color:#f1f1f1;letter-spacing:1.144px;transform-origin:0 50%;left:1001.30px;transform:scaleX(1.1721)">#8</span>
<span class="t " id="t72" style="font-size:13px;top:694.00px;color:#c4c4c8;left:1020.30px">/</span>
<span class="t " id="t73" style="font-size:11.4px;top:696.00px;color:#c4c4c8;letter-spacing:-0.272px;left:1024.80px">34</span>
<span class="t " id="t74" style="font-size:13px;top:684.00px;color:#f1f1f1;letter-spacing:0.262px;transform-origin:0 50%;left:1148.60px;transform:scaleX(1.0771)">2 years ago</span>
<span class="t " id="t75" style="font-size:11.4px;top:705.00px;color:#a3a3a7;letter-spacing:-0.258px;transform-origin:0 50%;left:1136.10px;transform:scaleX(0.9227)">Jun 1, 2020, 12:23 PM</span>
<svg class="ic" style="left:1280.00px;top:691.85px;" width="11.38" height="13.00" viewBox="0 0 448 512"><path fill="#d9d9e6" stroke="#d9d9e6" stroke-width="22" stroke-linejoin="round" d="M207.029 381.476L12.686 187.132c-9.373-9.373-9.373-24.569 0-33.941l22.667-22.667c9.357-9.357 24.522-9.375 33.901-.040L224 284.505l154.745-154.021c9.379-9.335 24.544-9.317 33.901.040l22.667 22.667c9.373 9.373 9.373 24.569 0 33.941L240.971 381.476c-9.373 9.372-24.569 9.372-33.942 0z"/></svg>
<span class="t " id="t76" style="font-size:13px;top:772.00px;color:#f1f1f1;letter-spacing:-0.208px;transform-origin:0 50%;left:43.05px;transform:scaleX(0.9606)">SPN 7</span>
<span class="t " id="t77" style="font-size:13px;top:762.00px;color:#f1f1f1;letter-spacing:0.148px;transform-origin:0 50%;left:123.50px;transform:scaleX(1.0450)">The Dirty of Loudness</span>
<span class="t " id="t78" style="font-size:11.4px;top:783.00px;color:#f1f1f1;letter-spacing:0.008px;left:123.50px">Tatsh Assault X</span>
<span class="t " id="t79" style="font-size:11px;top:775.00px;color:#a3a3a7;letter-spacing:-1.068px;transform-origin:0 50%;left:422.80px;transform:scaleX(0.8811)">PB</span>
<span class="t " id="t80" style="font-size:13px;top:752.00px;font-weight:bold;color:#f1f1f1;letter-spacing:0.219px;left:475.70px">AA</span>
<span class="t " id="t81" style="font-size:13px;top:772.00px;color:#f1f1f1;letter-spacing:-0.560px;transform-origin:0 50%;left:467.30px;transform:scaleX(0.8924)">88.11%</span>
<span class="t " id="t82" style="font-size:11.4px;top:793.00px;color:#b8b8b8;letter-spacing:-0.159px;transform-origin:0 50%;left:470.45px;transform:scaleX(0.9554)">[1304]</span>
<span class="t " id="t83" style="font-size:13px;top:762.00px;font-weight:bold;color:#f1f1f1;letter-spacing:0.105px;transform-origin:0 50%;left:553.35px;transform:scaleX(1.0212)">AAA-12</span>
<span class="t " id="t84" style="font-size:11.4px;top:783.00px;color:#b4b4b6;letter-spacing:-0.328px;transform-origin:0 50%;left:559.45px;transform:scaleX(0.9307)">AA+153</span>
<span class="t " id="t85" style="font-size:13px;top:762.00px;font-weight:bold;color:#f1f1f1;letter-spacing:-0.285px;transform-origin:0 50%;left:661.30px;transform:scaleX(0.9474)">HARD CLEAR</span>
<span class="t " id="t86" style="font-size:11.4px;top:783.00px;color:#d0d0d0;letter-spacing:-0.328px;transform-origin:0 50%;left:683.60px;transform:scaleX(0.9049)">[BP: 12]</span>
<span class="t " id="t87" style="font-size:13px;top:772.00px;color:#f1f1f1;letter-spacing:0.381px;transform-origin:0 50%;left:840.00px;transform:scaleX(1.0698)">N/A</span>
<span class="t " id="t88" style="font-size:13px;top:772.00px;font-weight:bold;color:#f1f1f1;letter-spacing:1.144px;transform-origin:0 50%;left:1001.30px;transform:scaleX(1.1721)">#7</span>
<span class="t " id="t89" style="font-size:13px;top:772.00px;color:#c4c4c8;left:1020.30px">/</span>
<span class="t " id="t90" style="font-size:11.4px;top:774.00px;color:#c4c4c8;letter-spacing:-0.272px;left:1024.80px">84</span>
<span class="t " id="t91" style="font-size:13px;top:762.00px;color:#f1f1f1;letter-spacing:0.262px;transform-origin:0 50%;left:1148.60px;transform:scaleX(1.0771)">3 years ago</span>
<span class="t " id="t92" style="font-size:11.4px;top:783.00px;color:#a3a3a7;letter-spacing:-0.256px;transform-origin:0 50%;left:1135.10px;transform:scaleX(0.9246)">Nov 10, 2019, 2:39 PM</span>
<svg class="ic" style="left:1280.00px;top:769.85px;" width="11.38" height="13.00" viewBox="0 0 448 512"><path fill="#d9d9e6" stroke="#d9d9e6" stroke-width="22" stroke-linejoin="round" d="M207.029 381.476L12.686 187.132c-9.373-9.373-9.373-24.569 0-33.941l22.667-22.667c9.357-9.357 24.522-9.375 33.901-.040L224 284.505l154.745-154.021c9.379-9.335 24.544-9.317 33.901.040l22.667 22.667c9.373 9.373 9.373 24.569 0 33.941L240.971 381.476c-9.373 9.372-24.569 9.372-33.942 0z"/></svg>
</section>
</main>
</body>
</html>
